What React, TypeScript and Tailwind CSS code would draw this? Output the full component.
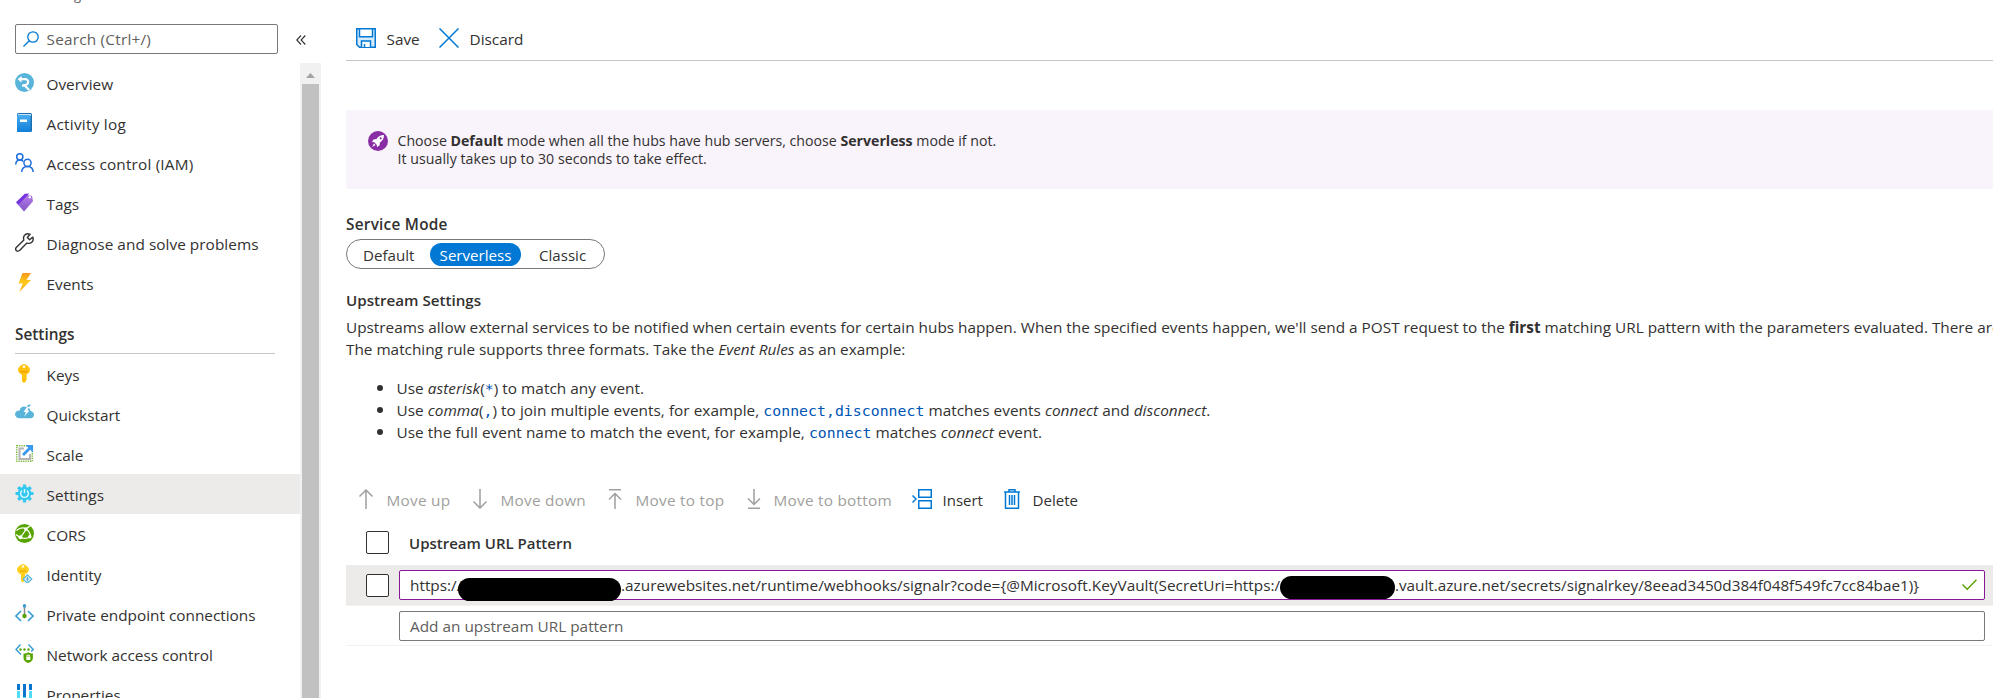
import React from "react";

type P = { children?: React.ReactNode };

const I = ({ children }: P) => (
  <svg width="19" height="19" viewBox="0 0 19 19" fill="none" className="mb-px shrink-0">
    {children}
  </svg>
);

const icons: Record<string, React.ReactNode> = {
  overview: (
    <I>
      <circle cx="9.500" cy="9.500" r="9.500" fill="#59b4d9" />
      <path d="M5 6.200h6.200a2.900 2.900 0 0 1 .6 5.200c-1.500.6-3.300 1.200-4.800 1.200" stroke="#fff" strokeWidth="2.200" />
      <path d="M6.500 3 2.600 6.200l3.900 3.200z" fill="#fff" />
      <path d="M9.500 12.200 14.200 17" stroke="#fff" strokeWidth="2.200" />
    </I>
  ),
  log: (
    <I>
      <defs>
        <linearGradient id="lg" x1="0" y1="0" x2="0" y2="1">
          <stop stopColor="#4aaef2" />
          <stop offset="1" stopColor="#0f7fd8" />
        </linearGradient>
      </defs>
      <rect x="2" y="0" width="15" height="19" rx="1.500" fill="#1a6fb5" />
      <rect x="3" y="1" width="13" height="2" fill="#c9dff2" />
      <rect x="2" y="2" width="13.500" height="17" rx="1" fill="url(#lg)" />
      <rect x="5" y="6.500" width="7" height="2.500" fill="#fff" />
    </I>
  ),
  iam: (
    <I>
      <g stroke="#1f6fdc" strokeWidth="1.500">
        <circle cx="4.800" cy="3.800" r="3.100" />
        <circle cx="12.500" cy="9.800" r="3.600" />
        <path d="M.7 11.500C.9 8.500 2.500 7 4.900 7c1.500 0 2.600.5 3.400 1.500M6.700 19c.2-3.500 2.500-5.600 5.800-5.600s5.500 2.100 5.700 5.600" />
      </g>
    </I>
  ),
  tags: (
    <I>
      <defs>
        <linearGradient id="tg" x1="0" y1="0" x2="0" y2="1">
          <stop stopColor="#b37bea" />
          <stop offset="1" stopColor="#8555c8" />
        </linearGradient>
      </defs>
      <path d="M3 10.500 12 2l5 .8 1 5.400L9 18.500 1.500 10z" fill="url(#tg)" />
      <path d="m1 9.300 8.800-8.500 4.500-.4L3.300 11.800z" fill="#7434dc" />
      <circle cx="14.800" cy="4.300" r="1.200" fill="#fff" />
    </I>
  ),
  wrench: (
    <I>
      <path
        d="M17.800 4.100 14.600 6.800l-2.300-2.300L15.100 1.300C12.800.3 10.500.9 9.300 2.700c-.9 1.300-1 2.800-.4 4.300L1.500 14.200c-1 1-1 2.400-.2 3.300.9.9 2.400.9 3.300-.1l7.300-7.300c3.600 1.200 7.500-1.700 5.900-6z"
        stroke="#333"
        strokeWidth="1.400"
        strokeLinejoin="round"
      />
    </I>
  ),
  bolt: (
    <I>
      <defs>
        <linearGradient id="bg" x1="0" y1="0" x2="0" y2="1">
          <stop stopColor="#f9981c" />
          <stop offset=".5" stopColor="#ffca1a" />
          <stop offset="1" stopColor="#f9a51c" />
        </linearGradient>
      </defs>
      <path d="M7.500 0H16l-4.500 7H16L4.300 19 7.800 10.500H3.500z" fill="url(#bg)" />
    </I>
  ),
  key: (
    <I>
      <path d="M9 0c-1.400 0-6 3-6 5.500s1.700 4 4 5.500v6.500l2 1.500 2-1.500V16l1.300-1.200L11 13.500 12.300 12 11 11c2.500-1.500 4-3 4-5.500S10.500 0 9 0z" fill="#ffc20e" />
      <circle cx="9" cy="2.700" r="1.300" fill="#fff" />
      <rect x="5.500" y="7" width="7" height="1.300" fill="#f09a00" />
    </I>
  ),
  cloud: (
    <I>
      <path d="M15.500 7c-.3-1.500-1-2.500-2-3.200L16 .8h-3L11.500 3C8.500 1.500 5 3.200 4.700 6.500 2 6.500 0 8 0 10.300c0 2.200 2 4 4.500 4h11c2 0 3.500-1.600 3.500-3.600 0-2-1.500-3.500-3.500-3.700z" fill="#59b4d9" />
      <path d="M12.300 2.500 8.500 8h2.500l-1.800 4.500 5.300-6h-2.300l2-3.500z" fill="#fff" />
    </I>
  ),
  scale: (
    <I>
      <rect x="1.700" y="1.700" width="15.600" height="15.600" stroke="#7fba3c" strokeWidth="1.500" strokeDasharray="1.300 1" />
      <path d="M9 4.500H4.500v10.500H15v-5" stroke="#b4b4b4" strokeWidth="2" />
      <path d="M10.500 1H18v7.500z" fill="#3999ec" />
      <path d="m8 11 7-7" stroke="#3999ec" strokeWidth="2.800" />
    </I>
  ),
  gear: (
    <I>
      <g stroke="#32c8f0" strokeWidth="3.200">
        <path d="M9.500.5v18M.5 9.500h18M3.200 3.200l12.600 12.600M15.800 3.200 3.200 15.800" />
      </g>
      <circle cx="9.500" cy="9.500" r="6.800" fill="#32c8f0" />
      <path d="M7 6.500a3.900 3.900 0 1 0 5 0" stroke="#e2f7fd" strokeWidth="1.400" />
      <path d="M9.500 5v4" stroke="#e2f7fd" strokeWidth="1.400" />
    </I>
  ),
  cors: (
    <I>
      <circle cx="9.500" cy="9.500" r="9.500" fill="#57a300" />
      <path d="M1.500 6.500C5 3.500 8 3.500 10.500 4.500M5.500 13.500l5.500-8M5.500 13.500c4 1.500 7 1 9.500-.5M11 5c3 2 4.500 5 4.500 8M15 2l-4 3M5 13.500 1 10.500" stroke="#fff" strokeWidth="1.300" />
      <circle cx="10.800" cy="5" r="1.800" fill="#fff" />
      <circle cx="5.500" cy="13.300" r="2" fill="#fff" />
      <circle cx="14.800" cy="12.800" r="1.700" fill="#fff" />
    </I>
  ),
  identity: (
    <I>
      <path d="M8 0C6.500 0 2 3 2 5.500S4 9.500 6 10.500V17l1.800 1.500L9.500 17v-1.500l1-1-1-1.500 1-1-1-1.500c2.500-1 4.500-2.500 4.500-5S9.500 0 8 0z" fill="#ffd01e" />
      <circle cx="8" cy="2.500" r="1.300" fill="#fff" />
      <rect x="5" y="6.500" width="6" height="1.200" fill="#f0a800" />
      <path d="m12.500 10.800 4.300 4.300-4.300 4.200-4.300-4.200z" fill="#e4f3fa" stroke="#59b4d9" strokeWidth="1.200" />
      <path d="M12.500 12.800v4.500M10.800 15h3.400" stroke="#59b4d9" strokeWidth="1.200" />
    </I>
  ),
  endpoint: (
    <I>
      <path d="M6 7 1 12l5 5M13 7l5 5-5 5" stroke="#3c9fd0" strokeWidth="1.700" />
      <path d="M9.500 2v9" stroke="#8a8a8a" strokeWidth="1.500" />
      <circle cx="9.500" cy="1.900" r="1.800" fill="#3c9fd0" />
      <circle cx="9.500" cy="12" r="2.200" fill="#57a300" />
    </I>
  ),
  network: (
    <I>
      <path d="M5.500.5 1 5.500l5 5M13.500.5l4.700 5-2 2" stroke="#3c9fd0" strokeWidth="1.500" />
      <circle cx="5.500" cy="5.500" r="1.200" fill="#57a300" />
      <circle cx="9.500" cy="5.500" r="1.200" fill="#57a300" />
      <circle cx="13.500" cy="5.500" r="1.200" fill="#57a300" />
      <path d="M8.500 9.500c2 0 3.500-.5 4.700-1.300 1.200.8 2.700 1.300 4.700 1.300v4.500c0 2.500-2 4-4.700 5-2.700-1-4.700-2.500-4.700-5z" fill="#57a300" />
      <rect x="11.300" y="12.500" width="4" height="3.500" fill="#fff" />
      <path d="M12 12.500v-1.300h2.500v1.300" stroke="#fff" />
    </I>
  ),
  props: (
    <I>
      <path d="M2 0h3v6H2zM8 0h3v13H8zM14 0h3v6h-3z" fill="#0a74d0" />
      <path d="M2 7h3v12H2zM8 13h3v6H8zM14 7h3v12h-3z" fill="#50dcf8" />
    </I>
  ),
};

const top: [string, string, string][] = [
  ["overview", "Overview", ""],
  ["log", "Activity log", "tracking-[0.25px]"],
  ["iam", "Access control (IAM)", "tracking-[0.18px]"],
  ["tags", "Tags", ""],
  ["wrench", "Diagnose and solve problems", "tracking-[0.05px]"],
  ["bolt", "Events", ""],
];
const bottom: [string, string, string][] = [
  ["key", "Keys", ""],
  ["cloud", "Quickstart", ""],
  ["scale", "Scale", ""],
  ["gear", "Settings", "tracking-[0.1px]"],
  ["cors", "CORS", ""],
  ["identity", "Identity", "tracking-[0.1px]"],
  ["endpoint", "Private endpoint connections", ""],
  ["network", "Network access control", ""],
  ["props", "Properties", ""],
];

function NavItem({ item, active }: { item: [string, string, string]; active?: boolean }) {
  return (
    <li className={`flex h-10 shrink-0 items-center gap-[12.500px] pl-[15px] ${active ? "bg-[#edebe9]" : ""}`}>
      {icons[item[0]]}
      <span className={`whitespace-nowrap pt-[2px] ${item[2]}`}>{item[1]}</span>
    </li>
  );
}

const Code = ({ children }: P) => (
  <code className="font-['DejaVu_Sans_Mono',monospace] text-[14.8px] text-[#0055b3]">{children}</code>
);

const Bullet = ({ children }: P) => (
  <li className="flex h-[22px] items-center">
    <span className="mb-px mr-[13.500px] h-[6px] w-[6px] shrink-0 rounded-full bg-[#323130]" />
    <span>{children}</span>
  </li>
);

function Tool({ icon, label, cls, disabled, tw }: { icon: React.ReactNode; label: string; cls: string; disabled?: boolean; tw: string }) {
  return (
    <button className={`flex h-10 shrink-0 items-center ${disabled ? "text-[#a19f9d]" : ""} ${cls}`}>
      <svg width="20" height="20" viewBox="0 0 20 20" fill="none" strokeWidth="1.500" className={`shrink-0 ${disabled ? "stroke-[#a19f9d]" : "stroke-[#0078d4]"}`}>
        {icon}
      </svg>
      <span className={`ml-[10.500px] whitespace-nowrap pt-px text-left ${tw}`}>{label}</span>
    </button>
  );
}

const Checkbox = () => <span className="mt-px h-[23px] w-[23px] shrink-0 rounded-[2px] border border-[#323130] bg-white" />;

export default function App() {
  return (
    <div className="flex h-[698px] w-[1993px] overflow-hidden bg-white font-['Open_Sans',sans-serif] text-[15.35px] leading-[22px] text-[#323130]">
      <aside className="flex w-[321px] shrink-0 flex-col">
        <div className="flex h-6 shrink-0 items-start overflow-hidden pl-[15px]">
          <span className="-mt-[13px] pl-[59px] text-[13px] leading-4 text-[#605e5c]">g</span>
        </div>
        <div className="flex h-[30px] shrink-0 items-center pl-[15px]">
          <div className="flex h-[30px] w-[263px] items-center rounded-[2px] border border-[#7a7878] pl-[7px]">
            <svg width="16" height="16" viewBox="0 0 16 16" fill="none" stroke="#0078d4" strokeWidth="1.300">
              <circle cx="10" cy="6" r="5.200" />
              <path d="M6.300 9.700.5 15.500" />
            </svg>
            <span className="ml-[7.500px] tracking-[0.22px] text-[#605e5c]">Search (Ctrl+/)</span>
          </div>
          <svg width="10" height="10" viewBox="0 0 10 10" fill="none" stroke="#323130" strokeWidth="1.100" className="ml-[18px] mt-[2px]">
            <path d="M5 .5.800 5 5 9.500M9.300.5 5.100 5l4.200 4.500" />
          </svg>
        </div>
        <div className="mt-[9px] flex h-[635px] overflow-hidden">
          <nav className="w-[300px] shrink-0">
            <ul>{top.map((t) => <NavItem key={t[1]} item={t} />)}</ul>
            <div className="h-[51px] pl-[15px] pr-[25px]">
              <h3 className="h-[51px] border-b border-[#c8c6c4] pt-5 font-semibold">Settings</h3>
            </div>
            <ul>{bottom.map((t) => <NavItem key={t[1]} item={t} active={t[1] === "Settings"} />)}</ul>
          </nav>
          <div className="flex w-[21px] flex-col items-center bg-[#f1f1f1]">
            <div className="flex h-[21px] items-center pt-[3px]">
              <svg width="9" height="5"><path d="M4.500 0 9 5H0z" fill="#a3a3a3" /></svg>
            </div>
            <div className="w-[17px] grow bg-[#c1c1c1]" />
          </div>
        </div>
      </aside>

      <main className="ml-[25px] flex w-[1647px] shrink-0 flex-col overflow-hidden">
        <div className="flex h-[61px] shrink-0 items-center border-b border-[#c8c6c4] pt-[16px] pl-[10px]">
          <Tool
            label="Save"
            cls="w-[83px]"
            tw=""
            icon={
              <>
                <path d="M.75.75h18.500v18.500H3.500L.75 16.500z" fill="#d7ebfa" />
                <path d="M3.500.75h13v8h-13zM5.500 19v-6h9v6M8.500 19v-3" fill="#fff" />
              </>
            }
          />
          <Tool label="Discard" cls="" tw="" icon={<path d="m.5.500 19 19M19.500.500l-19 19" />} />
        </div>

        <section className="mt-[49px] flex h-[79px] shrink-0 rounded-l-[3px] bg-[#f9f3fb] pl-[22px] pt-[21px]">
          <svg width="20" height="20" viewBox="0 0 20 20" fill="none" className="shrink-0">
            <circle cx="10" cy="10" r="10" fill="#8a2da5" />
            <path d="M16 4c-3.500 0-5.700 1.500-7.500 4L5.500 8.500 4 11l2.300.3L8.700 13.700 9 16l2.500-1.500.5-3c2.500-1.800 4-4 4-7.500z" fill="#fff" />
            <circle cx="12.700" cy="7.300" r="1.100" fill="#8a2da5" />
            <path d="m6 12.500-2 3.500 3.500-2z" fill="#fff" />
          </svg>
          <p className="ml-[9.500px] pt-px text-[14.16px] leading-[18.200px]">
            Choose <b>Default</b> mode when all the hubs have hub servers, choose <b>Serverless</b> mode if not.
            <br />
            <span className="tracking-[0.04px]">It usually takes up to 30 seconds to take effect.</span>
          </p>
        </section>

        <h2 className="mt-[24px] h-[22px] shrink-0 text-[15.350px] font-semibold tracking-[0.25px]">Service Mode</h2>
        <div className="mt-[4px] flex h-[30px] w-[259px] shrink-0 items-center rounded-full border border-[#7a7878] text-[15.1px]">
          <span className="w-[83px] pl-[16px] pt-px">Default</span>
          <span className="flex h-[23px] w-[91px] items-center justify-center rounded-full bg-[#0078d4] pt-px text-white">Serverless</span>
          <span className="pl-[18px] pt-px">Classic</span>
        </div>

        <h2 className="mt-[20px] h-[22px] shrink-0 text-[15.15px] font-semibold">Upstream Settings</h2>
        <div className="mt-[5px] shrink-0 whitespace-nowrap text-[15.33px]">
          <p>
            Upstreams allow external services to be notified when certain events for certain hubs happen. When the specified events happen, we'll send a POST request to the <b>first</b> matching URL pattern with the parameters evaluated. There are
          </p>
          <p>
            The matching rule supports three formats. Take the <i>Event Rules</i> as an example:
          </p>
        </div>
        <ul className="mt-[17px] h-[66px] shrink-0 whitespace-nowrap pl-[31px] tracking-[0.04px]">
          <Bullet>Use <i>asterisk</i>(<Code>*</Code>) to match any event.</Bullet>
          <Bullet>Use <i>comma</i>(<Code>,</Code>) to join multiple events, for example, <Code>connect,disconnect</Code> matches events <i>connect</i> and <i>disconnect</i>.</Bullet>
          <Bullet>Use the full event name to match the event, for example, <Code>connect</Code> matches <i>connect</i> event.</Bullet>
        </ul>

        <div className="mt-[36px] flex h-10 shrink-0 items-center pl-[10px]">
          <Tool disabled label="Move up" cls="w-[114px]" tw="tracking-[0.25px]" icon={<path d="M10 20V1M3.500 7.500 10 1l6.500 6.500" />} />
          <Tool disabled label="Move down" cls="w-[135px]" tw="tracking-[0.25px]" icon={<path d="M10 0v19M3.500 12.500 10 19l6.500-6.500" />} />
          <Tool disabled label="Move to top" cls="w-[138px]" tw="tracking-[0.25px]" icon={<path d="M4 .75h12M10 20V5M4 10.500l6-6 6 6" />} />
          <Tool disabled label="Move to bottom" cls="w-[169px]" tw="tracking-[0.25px]" icon={<path d="M4 19.250h12M10 0v15M4 9.500l6 6 6-6" transform="translate(1 0)" />} />
          <Tool label="Insert" cls="w-[90px]" tw="text-[15px]" icon={<path d="M6.750.75h12.500v7.500H6.750zM6.750 11.750h12.500v7.500H6.750zM.5 6.500 4 10 .5 13.500" />} />
          <Tool label="Delete" cls="" tw="text-[15.1px]" icon={<path d="M2 3h16M7 3V.75h6V3M3.500 3v16.250h13V3M7.500 6v10M10 6v10M12.500 6v10" />} />
        </div>

        <div className="flex h-[46px] shrink-0 items-center pb-px pl-5">
          <Checkbox />
          <span className="ml-5 pt-[2px] text-[15px] font-semibold">Upstream URL Pattern</span>
        </div>
        <div className="flex h-[41px] shrink-0 items-center border-b border-[#f3f2f1] bg-[#edebe9] pl-5">
          <Checkbox />
          <div className="relative ml-[10px] flex h-[30px] w-[1586px] items-center rounded-[2px] border border-[#881798] bg-white pl-[10px] pr-[7px]">
            <span className="w-[48px] whitespace-nowrap">https://</span>
            <span className="w-[163px]" />
            <span className="w-[660px] whitespace-nowrap tracking-[0.01px]">.azurewebsites.net/runtime/webhooks/signalr?code={"{"}@Microsoft.KeyVault(SecretUri=https:/</span>
            <span className="w-[114px]" />
            <span className="whitespace-nowrap text-[15.25px]">.vault.azure.net/secrets/signalrkey/8eead3450d384f048f549fc7cc84bae1){"}"}</span>
            <svg width="15" height="12" viewBox="0 0 15 12" fill="none" stroke="#57a300" strokeWidth="1.400" className="ml-auto">
              <path d="m.5 5.500 4.700 4.700L14.500.7" />
            </svg>
            <span className="absolute left-[58px] top-[7px] h-[23px] w-[163px] rounded-full bg-black" />
            <span className="absolute left-[880px] top-[5px] h-[23px] w-[115px] rounded-full bg-black" />
          </div>
        </div>
        <div className="flex h-[40px] shrink-0 items-center border-b border-[#f3f2f1] pl-[53px]">
          <div className="flex h-[30px] w-[1586px] items-center rounded-[2px] border border-[#7a7878] pl-[10px] text-[#605e5c]">Add an upstream URL pattern</div>
        </div>
      </main>
    </div>
  );
}
